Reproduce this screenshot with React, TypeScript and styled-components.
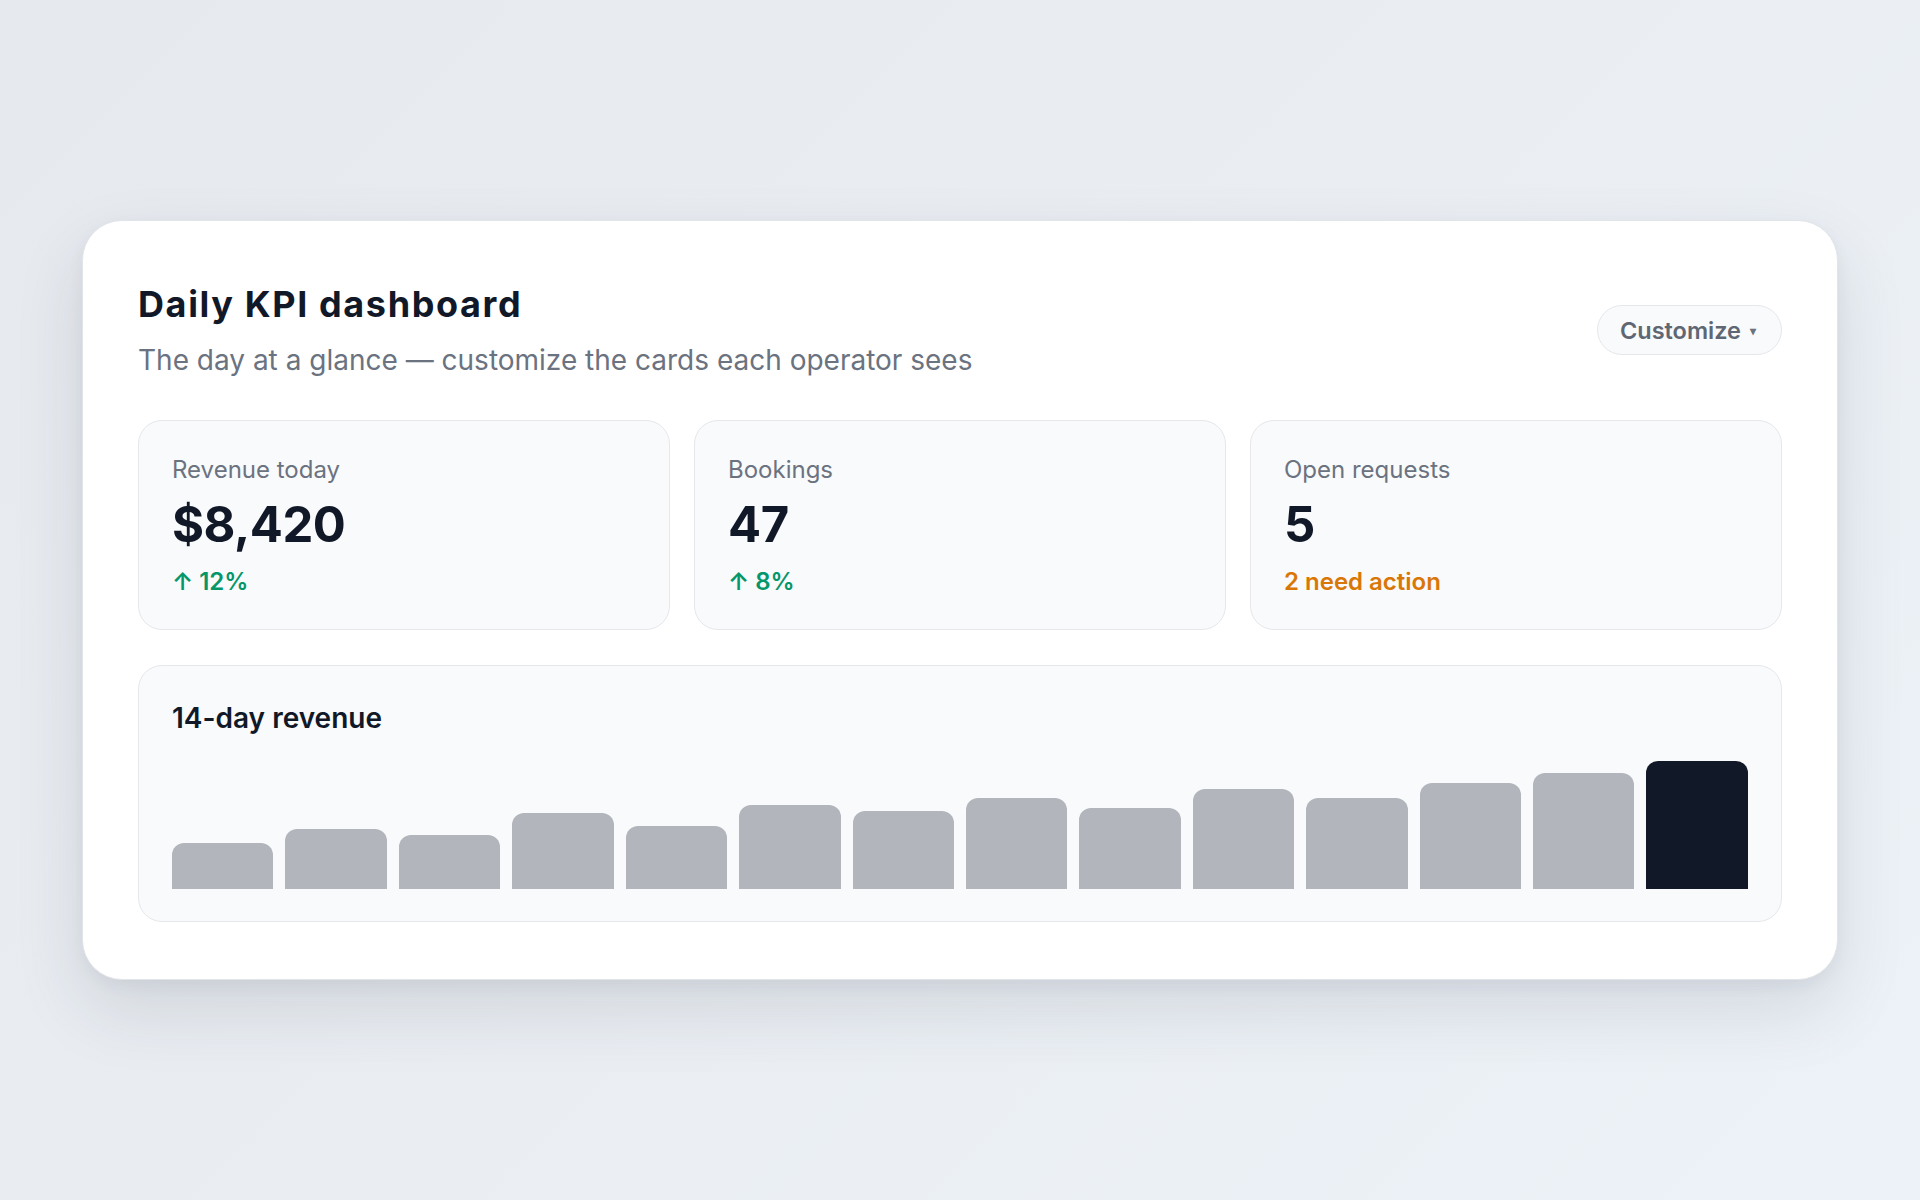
import React from 'react'
import styled, { createGlobalStyle } from 'styled-components'

const GlobalStyle = createGlobalStyle`
	* {
		box-sizing: border-box;
	}
	body {
		margin: 0;
		font-family: Inter, 'Noto Sans', 'Liberation Sans', sans-serif;
		color: #111827;
		-webkit-font-smoothing: antialiased;
	}
`

const kpis = [
	{ label: 'Revenue today', value: '$8,420', note: '↑ 12%', tone: 'up' },
	{ label: 'Bookings', value: '47', note: '↑ 8%', tone: 'up' },
	{ label: 'Open requests', value: '5', note: '2 need action', tone: 'warn' },
]

// bar heights in px, last one is today
const revenue = [46, 60, 54, 76, 63, 84, 78, 91, 81, 100, 91, 106, 116, 128]

export default function App() {
	return (
		<>
			<GlobalStyle />
			<Page>
				<Panel>
					<Header>
						<div>
							<Title>Daily KPI dashboard</Title>
							<Subtitle>The day at a glance — customize the cards each operator sees</Subtitle>
						</div>
						<CustomizeButton type="button">
							Customize <Caret>▾</Caret>
						</CustomizeButton>
					</Header>

					<KpiGrid>
						{kpis.map((kpi) => (
							<KpiCard key={kpi.label}>
								<KpiLabel>{kpi.label}</KpiLabel>
								<KpiValue>{kpi.value}</KpiValue>
								<KpiNote $tone={kpi.tone}>{kpi.note}</KpiNote>
							</KpiCard>
						))}
					</KpiGrid>

					<ChartCard>
						<ChartTitle>14-day revenue</ChartTitle>
						<Bars>
							{revenue.map((h, i) => (
								<Bar key={i} $today={i === revenue.length - 1} style={{ height: h }} />
							))}
						</Bars>
					</ChartCard>
				</Panel>
			</Page>
		</>
	)
}

const Page = styled.div`
	min-height: 100vh;
	display: flex;
	align-items: center;
	justify-content: center;
	background: linear-gradient(135deg, #e6e9ee 0%, #eaeef3 50%, #edf2f8 100%);
`

const Panel = styled.div`
	width: 1756px;
	background: #ffffff;
	border: 1px solid #e1e4e8;
	border-radius: 40px;
	padding: 61px 55px 57px;
	box-shadow: 0 30px 70px rgba(30, 41, 59, 0.12), 0 6px 16px rgba(30, 41, 59, 0.05);
`

const Header = styled.div`
	display: flex;
	align-items: center;
	justify-content: space-between;
`

const Title = styled.h1`
	margin: 0;
	font-size: 36px;
	line-height: 44px;
	font-weight: 700;
	letter-spacing: 0.045em;
	color: #111827;
`

const Subtitle = styled.p`
	margin: 16px 0 0;
	font-size: 28px;
	line-height: 36px;
	font-weight: 400;
	color: #6b7280;
`

const CustomizeButton = styled.button`
	display: flex;
	align-items: center;
	gap: 9px;
	height: 50px;
	padding: 0 25px 0 22px;
	border: 1.5px solid #e5e7eb;
	border-radius: 999px;
	background: #f9fafb;
	font-family: inherit;
	font-size: 23.5px;
	font-weight: 600;
	color: #5f6773;
	cursor: pointer;
`

const Caret = styled.span`
	font-size: 12px;
	color: #6b7280;
`

const KpiGrid = styled.div`
	display: grid;
	grid-template-columns: repeat(3, 1fr);
	gap: 24px;
	margin-top: 42px;
`

const KpiCard = styled.div`
	display: flex;
	flex-direction: column;
	padding: 34px 33px 32px;
	background: #f9fafb;
	border: 1px solid #e5e7eb;
	border-radius: 24px;
`

const KpiLabel = styled.div`
	font-size: 24px;
	line-height: 30px;
	color: #6b7280;
`

const KpiValue = styled.div`
	margin-top: 12px;
	font-size: 49px;
	line-height: 56px;
	font-weight: 700;
	letter-spacing: -0.01em;
	color: #111827;
`

const KpiNote = styled.div<{ $tone: string }>`
	margin-top: 14px;
	font-size: 24px;
	line-height: 30px;
	font-weight: 600;
	color: ${(p) => (p.$tone === 'warn' ? '#d97706' : '#059669')};
`

const ChartCard = styled.div`
	margin-top: 35px;
	padding: 34px 33px 32px;
	background: #f9fafb;
	border: 1px solid #e5e7eb;
	border-radius: 24px;
`

const ChartTitle = styled.h2`
	margin: 0;
	font-size: 28px;
	line-height: 36px;
	font-weight: 600;
	color: #111827;
`

const Bars = styled.div`
	display: flex;
	align-items: flex-end;
	gap: 12px;
	height: 140px;
	margin-top: 13px;
`

const Bar = styled.div<{ $today: boolean }>`
	flex: 1;
	border-radius: 12px 12px 0 0;
	background: ${(p) => (p.$today ? '#111827' : '#b2b5bc')};
`
